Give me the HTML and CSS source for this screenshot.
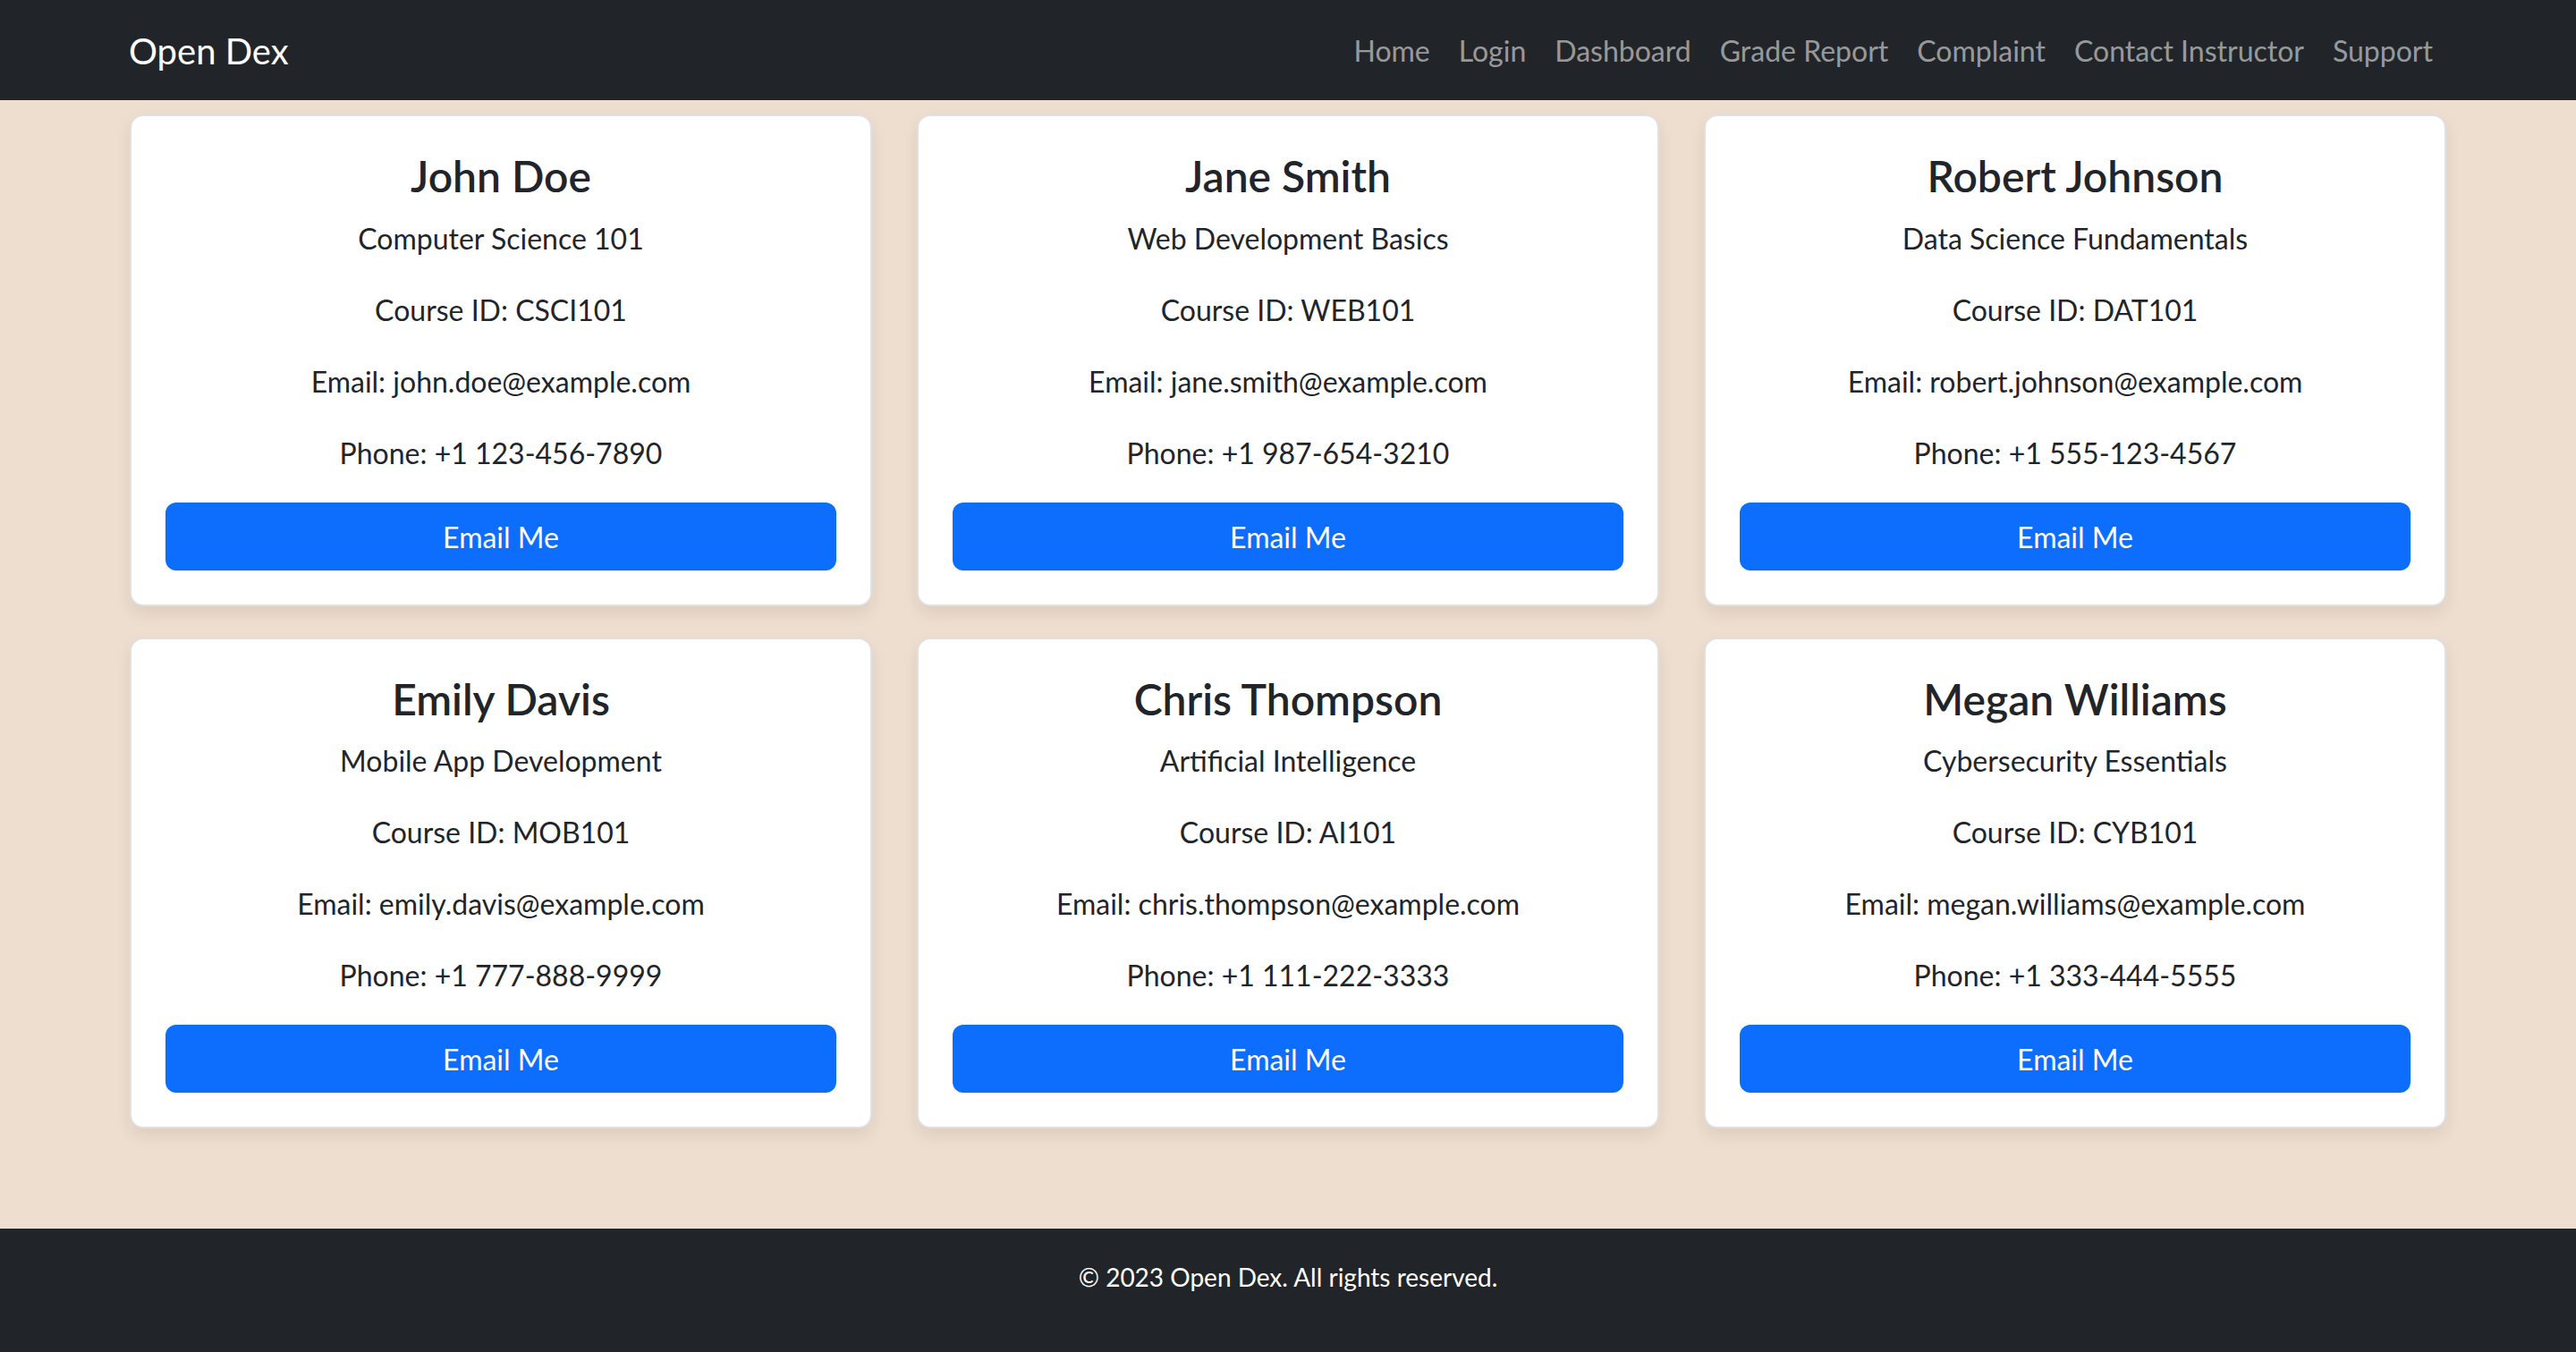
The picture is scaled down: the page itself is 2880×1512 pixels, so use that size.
FILE: index.html
```html
<!DOCTYPE html>
<html lang="en">
<head>
<meta charset="utf-8">
<title>Open Dex - Contact Instructor</title>
<link rel="stylesheet" href="styles.css">
</head>
<body>
<nav class="navbar">
  <div class="nav-inner">
    <a class="brand" href="#">Open Dex</a>
    <ul class="nav-links">
      <li><a href="#">Home</a></li>
      <li><a href="#">Login</a></li>
      <li><a href="#">Dashboard</a></li>
      <li><a href="#">Grade Report</a></li>
      <li><a href="#">Complaint</a></li>
      <li><a href="#">Contact Instructor</a></li>
      <li><a href="#">Support</a></li>
    </ul>
  </div>
</nav>

<main class="main">
  <div class="grid">
    <div class="card">
      <h4 class="name">John Doe</h4>
      <p>Computer Science 101</p>
      <p>Course ID: CSCI101</p>
      <p>Email: john.doe@example.com</p>
      <p>Phone: +1 123-456-7890</p>
      <a class="btn" href="#">Email Me</a>
    </div>
    <div class="card">
      <h4 class="name">Jane Smith</h4>
      <p>Web Development Basics</p>
      <p>Course ID: WEB101</p>
      <p>Email: jane.smith@example.com</p>
      <p>Phone: +1 987-654-3210</p>
      <a class="btn" href="#">Email Me</a>
    </div>
    <div class="card">
      <h4 class="name">Robert Johnson</h4>
      <p>Data Science Fundamentals</p>
      <p>Course ID: DAT101</p>
      <p>Email: robert.johnson@example.com</p>
      <p>Phone: +1 555-123-4567</p>
      <a class="btn" href="#">Email Me</a>
    </div>
    <div class="card">
      <h4 class="name">Emily Davis</h4>
      <p>Mobile App Development</p>
      <p>Course ID: MOB101</p>
      <p>Email: emily.davis@example.com</p>
      <p>Phone: +1 777-888-9999</p>
      <a class="btn" href="#">Email Me</a>
    </div>
    <div class="card">
      <h4 class="name">Chris Thompson</h4>
      <p>Artificial Intelligence</p>
      <p>Course ID: AI101</p>
      <p>Email: chris.thompson@example.com</p>
      <p>Phone: +1 111-222-3333</p>
      <a class="btn" href="#">Email Me</a>
    </div>
    <div class="card">
      <h4 class="name">Megan Williams</h4>
      <p>Cybersecurity Essentials</p>
      <p>Course ID: CYB101</p>
      <p>Email: megan.williams@example.com</p>
      <p>Phone: +1 333-444-5555</p>
      <a class="btn" href="#">Email Me</a>
    </div>
  </div>
</main>

<footer class="footer">
  <p>&copy; 2023 Open Dex. All rights reserved.</p>
</footer>
</body>
</html>
```

FILE: styles.css
```css
* { box-sizing: border-box; }

html, body {
  margin: 0;
  padding: 0;
}

body {
  font-family: "Segoe UI", Lato, "Liberation Sans", sans-serif;
  font-size: 32px;
  line-height: 1.5;
  color: #212529;
  background: #eedecf;
}

a { text-decoration: none; }

.navbar {
  background: #212529;
  padding: 16px 0;
}

.nav-inner {
  width: 2640px;
  margin: 0 auto;
  padding: 0 24px;
  display: flex;
  align-items: center;
  justify-content: space-between;
}

.brand {
  color: #fff;
  font-size: 40px;
  line-height: 60px;
  padding: 11px 0 9px;
}

.nav-links {
  list-style: none;
  margin: 0;
  padding: 0;
  display: flex;
}

.nav-links a {
  display: block;
  color: rgba(255, 255, 255, 0.55);
  font-size: 32px;
  line-height: 48px;
  padding: 17px 16px 15px;
}

.main {
  padding: 16px 0 112px;
}

.grid {
  width: 2640px;
  margin: 0 auto;
  padding: 0 24px;
  display: grid;
  grid-template-columns: repeat(3, 1fr);
  column-gap: 48px;
  row-gap: 35px;
}

.card {
  margin: 0 1px;
  background: #fff;
  border: 2px solid rgba(0, 0, 0, 0.12);
  border-radius: 15px;
  padding: 38px;
  text-align: center;
  box-shadow: 0 8px 18px rgba(0, 0, 0, 0.08);
}

.name {
  margin: 0 0 16px;
  font-size: 48px;
  line-height: 1.2;
  font-weight: 600;
}

.card p {
  margin: 0 0 31px;
  padding-top: 1px;
}

.btn {
  display: block;
  background: #0d6efd;
  color: #fff;
  border: 2px solid #0d6efd;
  border-radius: 12px;
  padding: 13px 24px 11px;
  font-size: 32px;
  line-height: 48px;
  text-align: center;
}

.footer {
  background: #212529;
  color: #fff;
  text-align: center;
  padding: 33px 0 31px;
}

.footer p {
  margin: 0 0 32px;
  font-size: 28px;
  line-height: 42px;
}
```
